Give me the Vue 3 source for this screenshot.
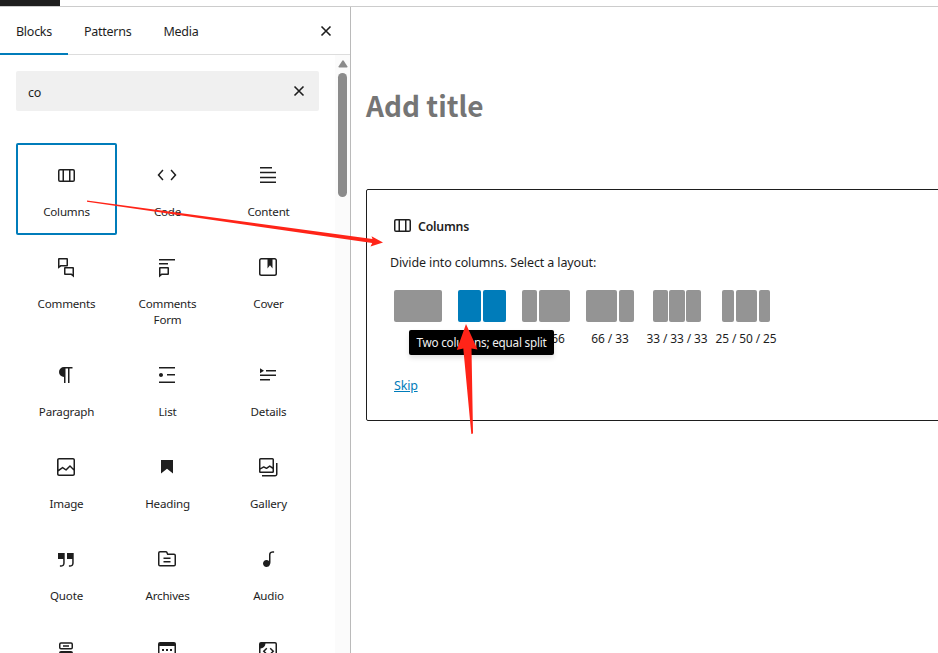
<script setup>
import { ref } from "vue";

const tabs = ["Blocks", "Patterns", "Media"];
const activeTab = ref("Blocks");
const search = ref("co");
const selected = ref("Columns");

const columnsIcon =
  "M15 7.5h-5v10h5v-10Zm1.5 0v10H19a.5.5 0 0 0 .5-.5V8a.5.5 0 0 0-.5-.5h-2.5ZM6 7.5h2.5v10H6a.5.5 0 0 1-.5-.5V8a.5.5 0 0 1 .5-.5ZM6 6h13a2 2 0 0 1 2 2v9a2 2 0 0 1-2 2H6a2 2 0 0 1-2-2V8a2 2 0 0 1 2-2Z";

const blocks = [
  { name: "Columns", path: columnsIcon },
  {
    name: "Code",
    path: "M7.4 6.4 2.5 12l4.9 5.6 1.1-1L4.5 12l4-4.6-1.1-1ZM16.6 6.4l-1.1 1 4 4.6-4 4.6 1.1 1 4.9-5.6-4.9-5.6Z",
  },
  {
    name: "Content",
    path: "M4 20h16v-1.5H4V20zm0-4.8h16v-1.5H4v1.5zm0-6.4v1.5h16V8.8H4zM16 4H4v1.5h12V4z",
  },
  {
    name: "Comments",
    path: "M5 3h8a1 1 0 0 1 1 1v6.5a1 1 0 0 1-1 1H7.2L4 13.8V4a1 1 0 0 1 1-1Zm.5 1.5v6.2l.9-.7h6.1V4.5h-7ZM11 12h8a1 1 0 0 1 1 1v9.6L17 20h-6a1 1 0 0 1-1-1v-6a1 1 0 0 1 1-1Zm.5 1.5v5h6.1l.9.7v-5.7h-7Z",
  },
  {
    name: "Comments Form",
    path: "M4 4h16v1.5H4V4ZM4 8h9v1.5H4V8ZM5 12h8a1 1 0 0 1 1 1v6a1 1 0 0 1-1 1H7l-3 2.6V13a1 1 0 0 1 1-1Zm.5 1.5v5.7l.9-.7h6.1v-5h-7Z",
  },
  {
    name: "Cover",
    path: "M18.7 3H5.3C4 3 3 4 3 5.3v13.4C3 20 4 21 5.3 21h13.4c1.3 0 2.3-1 2.3-2.3V5.3C21 4 20 3 18.7 3zm.8 15.7c0 .4-.4.8-.8.8H5.3c-.4 0-.8-.4-.8-.8V5.3c0-.4.4-.8.8-.8h6.2v8.9l2.5-3.1 2.5 3.1V4.5h2.2c.4 0 .8.4.8.8v13.4z",
  },
  {
    name: "Paragraph",
    path: "M10 14v6h1.5V5.5H14V20h1.5V5.5h3V4H10a5 5 0 0 0 0 10z",
  },
  {
    name: "List",
    path: "M4 4v1.5h16V4H4zm8 8.5h8V11h-8v1.5zM4 20h16v-1.5H4V20zm4-8c0-1.1-.9-2-2-2s-2 .9-2 2 .9 2 2 2 2-.9 2-2z",
  },
  {
    name: "Details",
    path: "M4 16h10v1.5H4V16Zm0-4.5h16V13H4v-1.5ZM10 7h10v1.5H10V7ZM4 5.25l4 2.5-4 2.5v-5Z",
  },
  {
    name: "Image",
    path: "M19 3H5c-1.1 0-2 .9-2 2v14c0 1.1.9 2 2 2h14c1.1 0 2-.9 2-2V5c0-1.1-.9-2-2-2zM5 4.5h14c.3 0 .5.2.5.5v8.4l-3-2.9c-.3-.3-.8-.3-1 0L11.9 14 9 12c-.3-.2-.6-.2-.8 0l-3.6 2.6V5c-.1-.3.1-.5.4-.5zm14 15H5c-.3 0-.5-.2-.5-.5v-2.4l4.1-3 3 1.9c.3.2.7.2.9-.1L16 12l3.5 3.4V19c0 .3-.2.5-.5.5z",
  },
  { name: "Heading", path: "M6 5v13.6l6-4.75 6 4.75V5H6Z" },
  {
    name: "Gallery",
    path: "M16.375 4.5H4.625a.125.125 0 0 0-.125.125v8.254l2.859-1.54a.75.75 0 0 1 .68-.016l2.384 1.142 2.89-2.074a.75.75 0 0 1 .874 0l2.313 1.66V4.625a.125.125 0 0 0-.125-.125Zm.125 9.398-2.75-1.975-2.813 2.02a.75.75 0 0 1-.76.067l-2.444-1.17L4.5 14.583v1.792c0 .069.056.125.125.125h11.75a.125.125 0 0 0 .125-.125v-2.477ZM4.625 3C3.728 3 3 3.728 3 4.625v11.75C3 17.273 3.728 18 4.625 18h11.75c.898 0 1.625-.727 1.625-1.625V4.625C18 3.728 17.273 3 16.375 3H4.625ZM20 8v11c0 .69-.31 1-.999 1H6v1.5h13.001c1.52 0 2.499-.982 2.499-2.5V8H20Z",
  },
  {
    name: "Quote",
    path: "M13 6v6h5.2v4c0 .8-.2 1.4-.5 1.7-.6.6-1.6.6-2.5.5h-.3v1.5h.5c1 0 2.3-.1 3.3-1 .6-.6 1-1.6 1-2.8V6H13zm-9 6h5.2v4c0 .8-.2 1.4-.5 1.7-.6.6-1.6.6-2.5.5h-.3v1.5h.5c1 0 2.3-.1 3.3-1 .6-.6 1-1.6 1-2.8V6H4v6z",
  },
  {
    name: "Archives",
    path: "M11.934 7.406a1 1 0 0 0 .914.594H19a.5.5 0 0 1 .5.5v9a.5.5 0 0 1-.5.5H5a.5.5 0 0 1-.5-.5V6a.5.5 0 0 1 .5-.5h5.764a.5.5 0 0 1 .447.276l.723 1.63Zm1.064-1.216a.5.5 0 0 0 .462.31H19a2 2 0 0 1 2 2v9a2 2 0 0 1-2 2H5a2 2 0 0 1-2-2V6a2 2 0 0 1 2-2h5.764a2 2 0 0 1 1.789 1.106l.445 1.084ZM8.5 10.5h7V12h-7v-1.5Zm7 3.5h-7v1.5h7V14Z",
  },
  {
    name: "Audio",
    path: "M17.7 4.3c-1.2 0-2.8 0-3.8 1-.6.6-.9 1.5-.9 2.6V14c-.6-.6-1.5-1-2.5-1C8.6 13 7 14.6 7 16.5S8.6 20 10.5 20c1.5 0 2.8-1 3.3-2.3.5-.8.7-1.8.7-2.5V7.9c0-.7.2-1.2.5-1.6.6-.6 1.8-.6 2.8-.6h.3V4.3h-.4z",
  },
  {
    name: "Buttons",
    path: "M7 3.3h10a2 2 0 0 1 2 2v3.2a2 2 0 0 1-2 2H7a2 2 0 0 1-2-2V5.3a2 2 0 0 1 2-2Zm0 1.5a.5.5 0 0 0-.5.5v3.2a.5.5 0 0 0 .5.5h10a.5.5 0 0 0 .5-.5V5.3a.5.5 0 0 0-.5-.5H7ZM9 6.2h6v1.5H9V6.2ZM7 12h10a2 2 0 0 1 2 2v7H5v-7a2 2 0 0 1 2-2Z",
  },
  {
    name: "Calendar",
    path: "M5 3h14a2 2 0 0 1 2 2v14a2 2 0 0 1-2 2H5a2 2 0 0 1-2-2V5a2 2 0 0 1 2-2Zm-.5 4v12c0 .3.2.5.5.5h14c.3 0 .5-.2.5-.5V7h-15ZM7 10h2v2H7v-2Zm4 0h2v2h-2v-2Zm4 0h2v2h-2v-2Z",
  },
  {
    name: "Shortcode",
    path: "M5 3h14a2 2 0 0 1 2 2v14a2 2 0 0 1-2 2H5a2 2 0 0 1-2-2V5a2 2 0 0 1 2-2Zm4.5 1.5c-.2 2.8-2.2 4.8-5 5V19c0 .3.2.5.5.5h14c.3 0 .5-.2.5-.5V5c0-.3-.2-.5-.5-.5H9.5ZM10.3 8.7l1 1-2.5 2.5 2.5 2.5-1 1-3.6-3.5 3.6-3.5Zm4.4 0 3.6 3.5-3.6 3.5-1-1 2.5-2.5-2.5-2.5 1-1Z",
  },
];

const layouts = [
  { label: "", parts: [48] },
  { label: "", parts: [23, 23], active: true },
  { label: "33 / 66", parts: [15, 31] },
  { label: "66 / 33", parts: [31, 15] },
  { label: "33 / 33 / 33", parts: [14.7, 15.3, 14.7], wide: true },
  { label: "25 / 50 / 25", parts: [11.5, 21, 11.5], wide: true },
];
</script>

<template>
  <div class="screen">
    <header class="topbar"><div class="topbar-logo"></div></header>
    <div class="body">
      <aside class="inserter">
        <nav class="tabs">
          <button
            v-for="tab in tabs"
            :key="tab"
            class="tab"
            :class="{ active: tab === activeTab }"
            @click="activeTab = tab"
          >
            {{ tab }}
          </button>
          <button class="close" aria-label="Close">
            <svg width="24" height="24" viewBox="0 0 24 24">
              <path d="M7.5 7.5l9 9M16.5 7.5l-9 9" />
            </svg>
          </button>
        </nav>
        <div class="panel">
          <div class="panel-content">
            <div class="search">
              <input v-model="search" class="search-input" type="text" />
              <button class="search-clear" aria-label="Reset search">
                <svg width="24" height="24" viewBox="0 0 24 24">
                  <path d="M7.5 7.5l9 9M16.5 7.5l-9 9" />
                </svg>
              </button>
            </div>
            <div class="blocks">
              <div
                v-for="block in blocks"
                :key="block.name"
                class="block"
                :class="{ selected: block.name === selected }"
                @click="selected = block.name"
              >
                <svg class="icon" width="24" height="24" viewBox="0 0 24 24">
                  <path fill-rule="evenodd" :d="block.path" />
                </svg>
                <span class="block-name">{{ block.name }}</span>
              </div>
            </div>
          </div>
          <div class="scrollbar">
            <svg class="scroll-arrow" width="10" height="8" viewBox="0 0 10 8">
              <path d="M5 .3q.5 0 .9.6L9.3 6.2Q9.8 7.5 8.7 7.5H1.3Q.2 7.5.7 6.2L4.1.9Q4.5.3 5 .3Z" />
            </svg>
            <div class="scroll-thumb"></div>
          </div>
        </div>
      </aside>
      <main class="canvas">
        <h1 class="title">Add title</h1>
        <section class="placeholder">
          <div class="placeholder-label">
            <svg class="icon" width="24" height="24" viewBox="0 0 24 24">
              <path fill-rule="evenodd" :d="columnsIcon" />
            </svg>
            <span class="placeholder-name">Columns</span>
          </div>
          <p class="instructions">Divide into columns. Select a layout:</p>
          <div class="layouts">
            <div
              v-for="(layout, i) in layouts"
              :key="i"
              class="layout"
              :class="{ active: layout.active, wide: layout.wide }"
            >
              <div class="preview">
                <div
                  v-for="(part, j) in layout.parts"
                  :key="j"
                  class="part"
                  :style="{ width: part + 'px' }"
                ></div>
              </div>
              <span class="layout-label">{{ layout.label }}</span>
              <div v-if="layout.active" class="tooltip">
                <span>Two columns; equal split</span>
              </div>
            </div>
          </div>
          <a class="skip">Skip</a>
        </section>
      </main>
    </div>
    <svg class="arrows" width="938" height="653" viewBox="0 0 938 653">
      <path d="M87 200.5L372.5 239L371.5 236.3L383 242.6L370.5 246.5L372.2 243L87 201.7Z" />
      <path d="M466 324L477.5 349.5L471.5 348.5L473 433.5L471.3 434L463.3 348.5L456.8 350Z" />
    </svg>
  </div>
</template>

<style>
body {
  margin: 0;
  overflow: hidden;
}
</style>

<style scoped>
.screen {
  position: relative;
  display: flex;
  flex-direction: column;
  width: 938px;
  height: 653px;
  overflow: hidden;
  background: #fff;
  color: #1e1e1e;
  font-family: "Noto Sans", "Open Sans", sans-serif;
  font-size: 12.5px;
  letter-spacing: -0.2px;
}
button {
  padding: 0;
  border: 0;
  background: none;
  color: inherit;
  font: inherit;
  letter-spacing: inherit;
}
.topbar {
  flex: none;
  box-sizing: border-box;
  height: 7px;
  border-bottom: 1px solid #ccc;
}
.topbar-logo {
  width: 60px;
  height: 6px;
  background: #1e1e1e;
}
.body {
  display: flex;
  flex: 1;
  min-height: 0;
}
.inserter {
  box-sizing: border-box;
  display: flex;
  flex: none;
  flex-direction: column;
  width: 351px;
  border-right: 1px solid #bababa;
}
.tabs {
  box-sizing: border-box;
  display: flex;
  flex: none;
  height: 48px;
  border-bottom: 1px solid #ddd;
}
.tab {
  box-sizing: border-box;
  height: 48px;
  padding: 2px 16px 0;
  border-bottom: 2px solid transparent;
  letter-spacing: -0.26px;
}
.tab.active {
  width: 68px;
  border-color: #007cba;
}
.close {
  height: 24px;
  margin: 12px 12px 0 auto;
}
.close svg,
.search-clear svg {
  display: block;
  fill: none;
  stroke: #1e1e1e;
  stroke-width: 1.6;
}
.panel {
  display: flex;
  flex: 1;
  min-height: 0;
}
.panel-content {
  flex: 1;
  padding: 16px;
}
.search {
  display: flex;
  align-items: center;
  height: 40px;
  border-radius: 2px;
  background: #f0f0f0;
}
.search-input {
  flex: 1;
  min-width: 0;
  padding: 3px 12px 0;
  border: 0;
  outline: 0;
  background: none;
  color: inherit;
  font: inherit;
  letter-spacing: inherit;
}
.search-clear {
  margin-right: 8px;
}
.blocks {
  display: grid;
  grid-template-columns: repeat(3, 101px);
  margin-top: 32px;
}
.block {
  box-sizing: border-box;
  display: flex;
  flex-direction: column;
  align-items: center;
  min-height: 92px;
  padding: 20px 14px 15px;
  border-radius: 2px;
}
.block.selected {
  box-shadow: inset 0 0 0 2px #007cba;
}
.icon {
  flex: none;
  fill: #1e1e1e;
}
/* keeps the 24px icon on whole pixels in the 101px column */
.block .icon {
  margin-right: 1px;
}
.block-name {
  margin-top: 17px;
  font-size: 11.6px;
  line-height: 16px;
  text-align: center;
}
.scrollbar {
  display: flex;
  flex-direction: column;
  align-items: center;
  width: 15px;
  background: #fbfbfb;
}
.scroll-arrow {
  margin-top: 5px;
  fill: #8b8b8b;
}
.scroll-thumb {
  width: 9px;
  height: 124px;
  margin-top: 5px;
  border-radius: 5px;
  background: #8b8b8b;
}
.canvas {
  flex: 1;
  min-width: 0;
  padding-left: 15px;
}
.title {
  height: 46px;
  margin: 76px 0 60px;
  color: #757575;
  font: bold 28px/44px "Noto Sans CJK SC", sans-serif;
  letter-spacing: 0;
}
.placeholder {
  box-sizing: border-box;
  width: 640px;
  height: 232px;
  padding: 24px 23px;
  border: 1px solid #1e1e1e;
  border-radius: 2px;
}
.placeholder-label {
  display: flex;
  align-items: center;
  gap: 4px;
  height: 24px;
  margin-top: -1px;
  font-size: 12.3px;
  font-weight: 600;
}
.placeholder-name {
  padding-top: 2px;
}
.instructions {
  margin: 16px 0 17px;
  line-height: 20px;
  letter-spacing: -0.12px;
}
.layouts {
  display: flex;
  padding-left: 4px;
  height: 58px;
}
.layout {
  position: relative;
  display: flex;
  flex-direction: column;
  align-items: center;
  width: 48px;
  margin-right: 16px;
}
.layout.wide {
  width: 62px;
  margin: 0 11px 0 -4px;
}
.layout.wide + .layout.wide {
  margin-left: -4px;
}
.preview {
  display: flex;
  justify-content: space-between;
  width: 48px;
  height: 32px;
}
.part {
  border-radius: 2px;
  background: #949494;
}
.active .part {
  background: #007cba;
}
.layout-label {
  margin-top: 7px;
  font-size: 11.9px;
  line-height: 18px;
  letter-spacing: -0.08px;
  white-space: nowrap;
}
.tooltip {
  position: absolute;
  top: 40px;
  left: -49px;
  z-index: 1;
  width: 145px;
  border-radius: 2px;
  background: #000;
  box-shadow: 0 3px 5px rgba(0, 0, 0, 0.12);
  color: #f0f0f0;
  font-size: 11.7px;
  line-height: 25px;
  text-align: center;
  white-space: nowrap;
}
.skip {
  display: inline-block;
  margin: 28px 4px 0;
  color: #007cba;
  line-height: 20px;
  text-decoration: underline;
}
.arrows {
  position: absolute;
  top: 0;
  left: 0;
  z-index: 2;
  fill: #ff2418;
  pointer-events: none;
}
</style>
